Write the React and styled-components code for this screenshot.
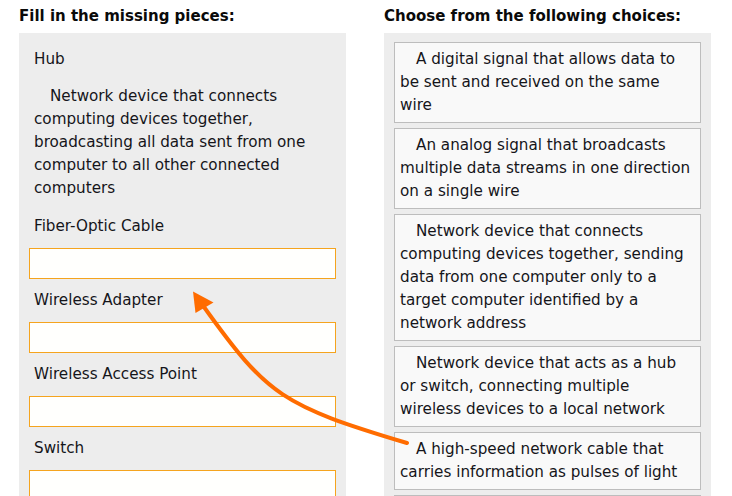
import React from 'react';
import styled, { createGlobalStyle } from 'styled-components';

const zones = [
  {
    label: 'Hub',
    placed:
      'Network device that connects computing devices together, broadcasting all data sent from one computer to all other connected computers',
  },
  { label: 'Fiber-Optic Cable' },
  { label: 'Wireless Adapter' },
  { label: 'Wireless Access Point' },
  { label: 'Switch' },
];

const choices = [
  'A digital signal that allows data to be sent and received on the same wire',
  'An analog signal that broadcasts multiple data streams in one direction on a single wire',
  'Network device that connects computing devices together, sending data from one computer only to a target computer identified by a network address',
  'Network device that acts as a hub or switch, connecting multiple wireless devices to a local network',
  'A high-speed network cable that carries information as pulses of light',
  'Hardware that lets a computer send and receive data over radio waves',
];

const GlobalStyle = createGlobalStyle`
  body {
    margin: 0;
    background: #fff;
    font-family: "DejaVu Sans", Verdana, sans-serif;
    color: #15151a;
  }
`;

const Page = styled.main`
  position: relative;
  display: grid;
  grid-template-columns: 327px 327px;
  column-gap: 38px;
  padding-left: 19px;
  align-items: start;
`;

const Column = styled.section`
  display: flex;
  flex-direction: column;
`;

const Heading = styled.h2`
  margin: 0;
  padding: 5px 0;
  font-size: 15px;
  line-height: 23px;
  font-weight: bold;
  color: #0a0a0a;
`;

const Panel = styled.div`
  background: #ededed;
  padding: ${({ top }) => top || 10}px 10px 10px;
  display: flex;
  flex-direction: column;
  gap: ${({ gap }) => gap || 0}px;
`;

const Zone = styled.div`
  padding: 5px 0;
  display: flex;
  flex-direction: column;
`;

const Label = styled.div`
  padding: 0 5px;
  font-size: 15.2px;
  line-height: 23px;
`;

const Slot = styled.div`
  margin-top: 10px;
  height: 31px;
  box-sizing: border-box;
  border: 1px solid #f5a41e;
  background: #fffffd;
`;

const Placed = styled.div`
  margin-top: 10px;
  border: 1px solid transparent;
  padding: 3px 4px 4px;
  font-size: 15.2px;
  line-height: 23px;
  text-indent: 16px;
`;

const Choice = styled.div`
  border: 1px solid #bdbdbd;
  background: #f9f9f9;
  padding: 5px;
  font-size: 15.2px;
  line-height: 23px;
  text-indent: 16px;
`;

const Overlay = styled.svg`
  position: absolute;
  left: 0;
  top: 0;
  width: 732px;
  height: 496px;
  overflow: visible;
  pointer-events: none;
`;

const Arrow = () => (
  <Overlay viewBox="0 0 732 496">
    <path
      d="M407 443 C282.5 405.7 267.8 396.1 204 307"
      fill="none"
      stroke="#ff6c00"
      strokeWidth="4"
      strokeLinecap="round"
    />
    <polygon points="193,291.5 195.5,313 213.5,302.5" fill="#ff6c00" />
  </Overlay>
);

export default function App() {
  return (
    <>
      <GlobalStyle />
      <Page>
        <Column>
          <Heading>Fill in the missing pieces:</Heading>
          <Panel>
            {zones.map((zone) => (
              <Zone key={zone.label}>
                <Label>{zone.label}</Label>
                {zone.placed ? <Placed>{zone.placed}</Placed> : <Slot />}
              </Zone>
            ))}
          </Panel>
        </Column>
        <Column>
          <Heading>Choose from the following choices:</Heading>
          <Panel top={9} gap={5}>
            {choices.map((text) => (
              <Choice key={text}>{text}</Choice>
            ))}
          </Panel>
        </Column>
        <Arrow />
      </Page>
    </>
  );
}
